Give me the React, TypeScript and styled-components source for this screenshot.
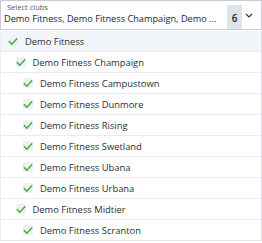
import React from "react";
import styled, { createGlobalStyle } from "styled-components";

const Global = createGlobalStyle`
  html, body { margin: 0; padding: 0; background: #ffffff; overflow: hidden; }
  body { font-family: "Open Sans", "Noto Sans", sans-serif; color: #2b2f33; }
`;

const Page = styled.div`
  width: 262px;
  height: 243px;
  overflow: hidden;
  position: relative;
`;

const Select = styled.div`
  height: 28px;
  border: 1px solid #c9cdd2;
  display: flex;
  align-items: stretch;
  padding-left: 3px;
  background: #fff;
`;

const SelectText = styled.div`
  flex: 1;
  min-width: 0;
  display: flex;
  flex-direction: column;
  padding-top: 2px;
`;

const Label = styled.div`
  font-size: 7.5px;
  line-height: 9px;
  color: #55595e;
  padding-left: 3px;
`;

const Value = styled.div`
  font-size: 9.2px;
  line-height: 14px;
  color: #23272b;
  white-space: nowrap;
  overflow: hidden;
`;

const Badge = styled.div`
  width: 15px;
  margin-top: 4px;
  background: #dfe4ea;
  display: flex;
  justify-content: center;
  padding-top: 6px;
  font-size: 10px;
  font-weight: 600;
  color: #22262a;
  margin-left: 4px;
`;

const Chevron = styled.div`
  width: 14px;
  margin-right: 5px;
  display: flex;
  align-items: center;
  justify-content: center;
  padding-top: 1px;
`;

const List = styled.div`
  margin-top: 1px;
  border-left: 1px solid #eceef1;
  border-right: 1px solid #dfe3e7;
  border-bottom: 1px solid #e3e6ea;
`;

const Row = styled.div<{ $level: number; $active?: boolean }>`
  height: 20px;
  border-bottom: 1px solid #e8ecf0;
  display: flex;
  align-items: center;
  padding-left: ${(p) => 7 + p.$level * 7.5}px;
  background: ${(p) => (p.$active ? "#f2f5f9" : "#ffffff")};
  font-size: 9.4px;
  color: #2b2f33;
  &:last-child { border-bottom: none; }
`;

const Box = styled.span`
  width: 10px;
  height: 10px;
  background: #eef0f2;
  border-radius: 1px;
  display: flex;
  align-items: center;
  justify-content: center;
  margin-right: 7px;
  flex-shrink: 0;
`;

const Below = styled.div`
  font-size: 10px;
  font-weight: 700;
  color: #222;
  padding-left: 14px;
  white-space: nowrap;
  line-height: 12px;
`;

const Check = () => (
  <svg width="10" height="9" viewBox="0 0 10 9">
    <path d="M1.2 4.6 L3.8 7.2 L8.8 1.8" fill="none" stroke="#3dae3f" strokeWidth="1.4" strokeLinecap="round" strokeLinejoin="round" />
  </svg>
);

const items: [string, number][] = [
  ["Demo Fitness", 0],
  ["Demo Fitness Champaign", 1],
  ["Demo Fitness Campustown", 2],
  ["Demo Fitness Dunmore", 2],
  ["Demo Fitness Rising", 2],
  ["Demo Fitness Swetland", 2],
  ["Demo Fitness Ubana", 2],
  ["Demo Fitness Urbana", 2],
  ["Demo Fitness Midtier", 1],
  ["Demo Fitness Scranton", 2],
];

export default function App() {
  return (
    <Page>
      <Global />
      <Select>
        <SelectText>
          <Label>Select clubs</Label>
          <Value>Demo Fitness, Demo Fitness Champaign, Demo ...</Value>
        </SelectText>
        <Badge>6</Badge>
        <Chevron>
          <svg width="8" height="5" viewBox="0 0 8 5">
            <path d="M1 1 L4 4 L7 1" fill="none" stroke="#333" strokeWidth="1.2" />
          </svg>
        </Chevron>
      </Select>
      <List>
        {items.map(([name, lvl], i) => (
          <Row key={i} $level={lvl} $active={i === 0}>
            <Box><Check /></Box>
            {name}
          </Row>
        ))}
      </List>
      <Below>ass securement. This role may then access to prospective</Below>
    </Page>
  );
}
